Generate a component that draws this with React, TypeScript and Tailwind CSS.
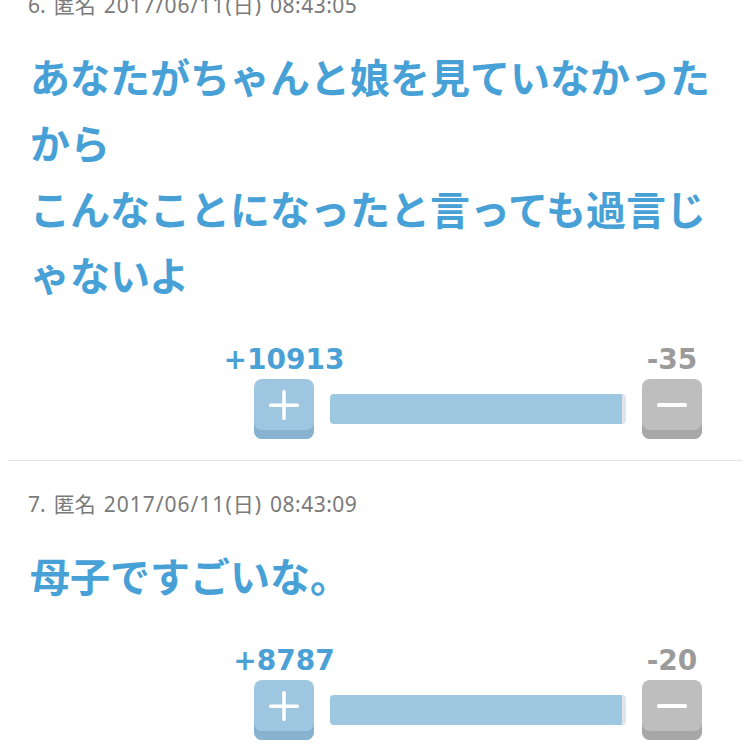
import React from "react";

type Comment = {
  no: number;
  date: string;
  time: string;
  body: string[];
  plus: number;
  minus: number;
};

const comments: Comment[] = [
  {
    no: 6,
    date: "2017/06/11(日)",
    time: "08:43:05",
    body: ["あなたがちゃんと娘を見ていなかったから", "こんなことになったと言っても過言じゃないよ"],
    plus: 10913,
    minus: 35,
  },
  {
    no: 7,
    date: "2017/06/11(日)",
    time: "08:43:09",
    body: ["母子ですごいな。"],
    plus: 8787,
    minus: 20,
  },
];

const jp = { fontFamily: '"Noto Sans CJK JP", sans-serif' };
const meta = { fontFamily: '"Noto Sans", "Noto Sans CJK JP", sans-serif' };
const num = { fontFamily: '"DejaVu Sans", sans-serif' };

function PlusIcon() {
  return (
    <svg width="30" height="30" viewBox="0 0 30 30">
      <rect x="0" y="13.5" width="30" height="3.5" rx="1.5" fill="#ffffff" />
      <rect x="13.25" y="0" width="3.5" height="30" rx="1.5" fill="#ffffff" />
    </svg>
  );
}

function MinusIcon() {
  return (
    <svg width="30" height="6" viewBox="0 0 30 6">
      <rect x="0" y="1" width="30" height="4" rx="1.5" fill="#ffffff" />
    </svg>
  );
}

function Votes({ plus, minus }: { plus: number; minus: number }) {
  return (
    <div className="flex justify-end pr-[40px]">
      <div className="grid grid-cols-[60px_296px_60px] gap-x-[16px]">
        <div className="flex h-[32px] items-center justify-center whitespace-nowrap text-[28px] font-bold text-[#4ba1d6]" style={num}>
          +{plus}
        </div>
        <div />
        <div className="flex h-[32px] items-center justify-center whitespace-nowrap text-[28px] font-bold text-[#9b9b9b]" style={num}>
          -{minus}
        </div>

        <div className="mt-[3px] flex h-[60px] items-start justify-center rounded-[8px] bg-[#9ec6e1] pt-[11px] shadow-[inset_0_-9px_0_#88b3d0]">
          <PlusIcon />
        </div>
        <div className="mt-[3px] flex items-center">
          <div className="flex h-[30px] w-full overflow-hidden rounded-[4px] bg-[#dfe5ea]">
            <div className="h-full w-[292px] bg-[#9ec8e1]" />
          </div>
        </div>
        <div className="mt-[3px] flex h-[60px] items-start justify-center rounded-[8px] bg-[#bebebe] pt-[23px] shadow-[inset_0_-9px_0_#a7a7a7]">
          <MinusIcon />
        </div>
      </div>
    </div>
  );
}

function CommentBlock({ c, last }: { c: Comment; last: boolean }) {
  return (
    <div className={last ? "" : "border-b border-[#e2e2e2]"}>
      <div className="px-[20px]">
        <div className="flex h-[24px] items-center gap-x-[8px] whitespace-nowrap text-[21px] leading-[24px] text-[#7a7a7a]" style={meta}>
          <span>{c.no}.</span>
          <span>匿名</span>
          <span className="tracking-[1px]">{c.date}</span>
          <span className="tracking-[0.5px]">{c.time}</span>
        </div>
        <div className="mt-[26px] pl-[2px] text-[40px] font-bold leading-[66px] text-[#48a1d6]" style={jp}>
          {c.body.map((line, i) => (
            <div key={i}>{line}</div>
          ))}
        </div>
      </div>
      <div className="mt-[37px] pb-[21px]">
        <Votes plus={c.plus} minus={c.minus} />
      </div>
    </div>
  );
}

export default function App() {
  return (
    <div className="min-h-[750px] w-[750px] overflow-hidden bg-white">
      <div className="-mt-[7px] px-[8px]">
        {comments.map((c, i) => (
          <div key={c.no} className={i === 0 ? "" : "pt-[31px]"}>
            <CommentBlock c={c} last={i === comments.length - 1} />
          </div>
        ))}
      </div>
    </div>
  );
}
